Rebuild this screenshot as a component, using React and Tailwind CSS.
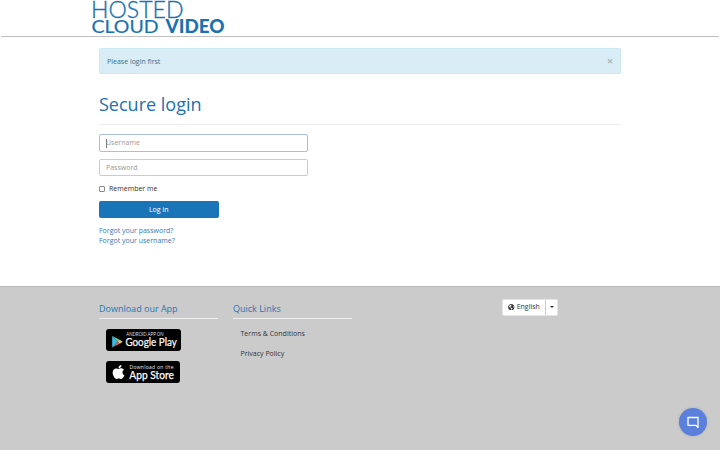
import { FaGlobeAmericas, FaApple } from "react-icons/fa";

function Logo() {
  return (
    <svg className="ml-[90px] block h-9 w-[134px] overflow-visible" viewBox="0 0 134 36" fill="#1a72b0" aria-label="Hosted Cloud Video">
      <text x="0" y="17.9" fontSize="22.5" fontFamily="Lato, sans-serif" fontWeight="300" stroke="#1a72b0" strokeWidth="0.35" textLength="92.5" lengthAdjust="spacingAndGlyphs">HOSTED</text>
      <text x="0.5" y="33" fontSize="18" fontFamily="Lato, sans-serif" fontWeight="400" stroke="#1a72b0" strokeWidth="0.2" textLength="67" lengthAdjust="spacingAndGlyphs">CLOUD</text>
      <text x="74.5" y="33" fontSize="18" fontFamily="Lato, sans-serif" fontWeight="900" textLength="59" lengthAdjust="spacingAndGlyphs">VIDEO</text>
    </svg>
  );
}

function GooglePlayBadge() {
  return (
    <a className="flex h-[22px] w-[75px] rounded-[3px] bg-black">
      <svg className="block h-[22px] w-[75px]" viewBox="0 0 75 22">
        <path d="M6.2 7v11.4l5.4-5.7z" fill="#35bde8" />
        <path d="M6.2 7l5.4 5.7 2.1-2z" fill="#6fc69a" />
        <path d="M13.7 10.7l-2.1 2 2.1 2 2.9-2z" fill="#f7c65b" />
        <path d="M6.2 18.4l5.4-5.7 2.1 2z" fill="#e8595a" />
        <text x="20.2" y="6.5" fill="#ddd" fontSize="4.8" fontFamily="Lato, sans-serif" textLength="37.5" lengthAdjust="spacingAndGlyphs">ANDROID APP ON</text>
        <text x="19.4" y="16.5" fill="#fff" stroke="#fff" strokeWidth="0.2" fontSize="11" fontFamily="Lato, sans-serif" textLength="51.5" lengthAdjust="spacingAndGlyphs">Google Play</text>
      </svg>
    </a>
  );
}

function AppStoreBadge() {
  return (
    <a className="flex h-[22px] w-[74px] items-center rounded-[3px] bg-black pl-[6px]">
      <FaApple className="h-[16px] w-[13px] shrink-0 text-white" />
      <svg className="block h-[22px] w-[50px] shrink-0" viewBox="0 0 50 22">
        <text x="4.5" y="7.7" fill="#eee" fontSize="5" fontFamily="Open Sans, sans-serif" textLength="44" lengthAdjust="spacing">Download on the</text>
        <text x="4.3" y="17.8" fill="#fff" stroke="#fff" strokeWidth="0.25" fontSize="11" fontFamily="Lato, sans-serif" textLength="44.5" lengthAdjust="spacingAndGlyphs">App Store</text>
      </svg>
    </a>
  );
}

export default function App() {
  return (
    <div className="flex h-[450px] w-[720px] flex-col overflow-hidden bg-white font-['Open_Sans',sans-serif] text-[7px] leading-[10px] text-[#333]">
      <header className="mx-px h-[37px] shrink-0 border-b border-[#bfbfbf]">
        <Logo />
      </header>
      <main className="h-[249px] shrink-0 px-[99px] pt-[11px]">
        <div className="flex h-[26px] w-[522px] items-center justify-between rounded-[2px] border border-[#cde9f1] bg-[#d9edf7] px-[7px] pt-px text-[#31708f]">
          <span>Please login first</span>
          <button className="text-[10.5px] font-bold leading-none text-[#a5b5bd]">×</button>
        </div>
        <h1 className="mt-[18px] h-[33px] w-[522px] border-b border-[#eee] text-[18px] leading-[24px] text-[#1a72b0]">Secure login</h1>
        <form className="mt-[9px] flex flex-col items-start">
          <div className="flex h-[18px] w-[209px] items-center rounded-[2px] border border-[#a9c0dc] px-[6px] text-[#999]">
            <span className="h-[9px] w-px bg-[#777]" />
            <span className="-ml-px">Username</span>
          </div>
          <div className="mt-[7px] flex h-[17px] w-[209px] items-center rounded-[2px] border border-[#ccc] px-[6px] text-[#999]">Password</div>
          <label className="mt-[7px] flex h-[12px] items-center gap-[4px]">
            <span className="size-[6px] rounded-[1px] border border-[#8a8a8a]" />
            <span>Remember me</span>
          </label>
          <button className="mt-[6px] h-[17px] w-[119.5px] rounded-[2px] bg-[#1a75b8] text-white">Log in</button>
          <a className="mt-[8px] text-[#337ab7]">Forgot your password?</a>
          <a className="text-[#337ab7]">Forgot your username?</a>
        </form>
      </main>
      <footer className="flex grow border-t border-[#bbb] bg-[#cbcbcb] pl-[99px]">
        <section className="w-[119px]">
          <h2 className="h-[32px] border-b border-[#eee] pt-[14.5px] text-[9px] leading-[13px] text-[#2577b5]">Download our App</h2>
          <div className="mt-[10px] flex flex-col gap-[10px] pl-[7.4px]">
            <GooglePlayBadge />
            <AppStoreBadge />
          </div>
        </section>
        <section className="ml-[15px] w-[119px]">
          <h2 className="h-[32px] border-b border-[#eee] pt-[14.5px] text-[9px] leading-[13px] text-[#2577b5]">Quick Links</h2>
          <nav className="mt-[10px] flex flex-col gap-[10px] pl-[7.5px]">
            <a>Terms &amp; Conditions</a>
            <a>Privacy Policy</a>
          </nav>
        </section>
        <div className="ml-[150px] mt-[11.5px] flex h-[17px] w-[56px] rounded-[2px] border border-[#e5e5e5] bg-white">
          <button className="flex w-[43px] items-center justify-center gap-[2px] border-r border-[#ccc]">
            <FaGlobeAmericas className="size-[6.5px]" />
            <span>English</span>
          </button>
          <button className="flex grow items-center justify-center">
            <span className="border-x-2 border-t-2 border-x-transparent border-t-[#333]" />
          </button>
        </div>
      </footer>
      <button className="absolute left-[679px] top-[408px] flex size-7 items-center justify-center rounded-full bg-[#5a80dc] shadow-[0_0_3px_rgba(0,0,0,0.15)]">
        <svg className="size-[12px]" viewBox="0 0 12 12" fill="none" stroke="#fff" strokeWidth="1.3">
          <path d="M1 1.5h10v10l-2.2-2.2H1z" />
        </svg>
      </button>
    </div>
  );
}
